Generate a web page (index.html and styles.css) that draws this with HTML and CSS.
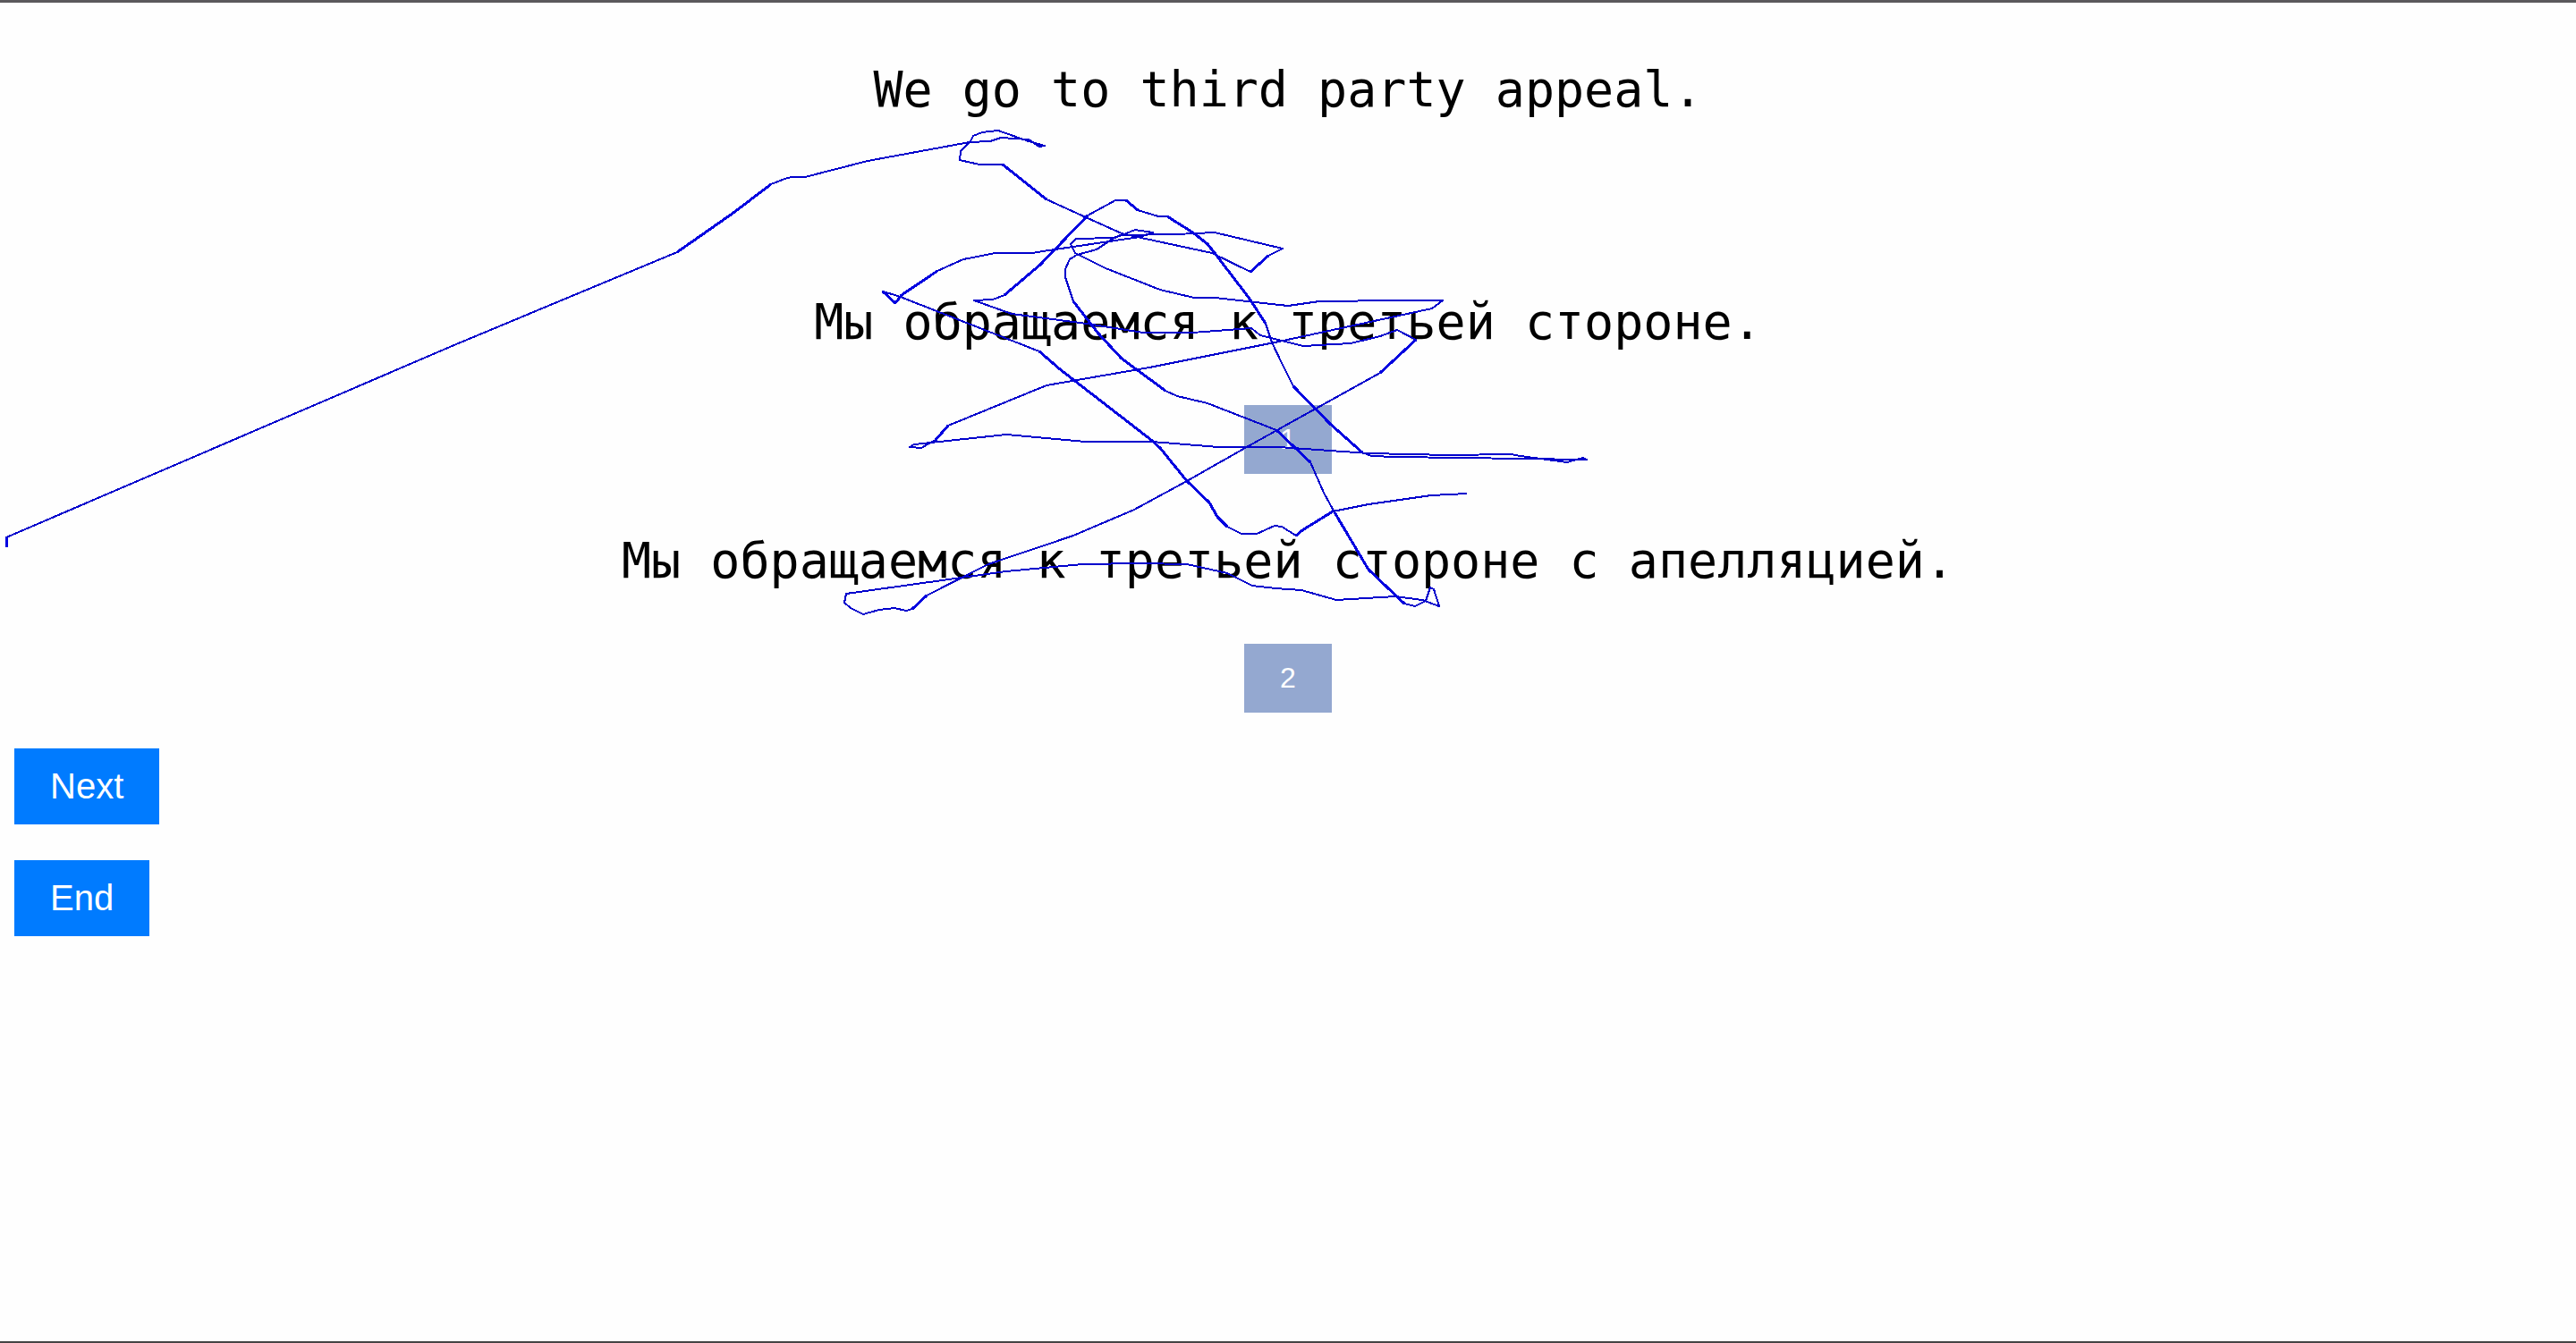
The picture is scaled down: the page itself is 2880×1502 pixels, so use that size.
FILE: index.html
```html
<!DOCTYPE html>
<html lang="ru">
<head>
<meta charset="utf-8">
<title>Translation</title>
<link rel="stylesheet" href="styles.css">
</head>
<body>
<main class="quiz">
  <p class="phrase" lang="en">We go to third party appeal.</p>
  <section class="option">
    <p class="phrase">Мы обращаемся к третьей стороне.</p>
    <button class="choice" type="button">1</button>
  </section>
  <section class="option">
    <p class="phrase">Мы обращаемся к третьей стороне с апелляцией.</p>
    <button class="choice" type="button">2</button>
  </section>
  <div class="actions">
    <button class="action" type="button" lang="en">Next</button>
    <button class="action" type="button" lang="en">End</button>
  </div>
</main>
<!-- pointer trail drawn over the page -->
<svg class="trail" width="1800" height="700" viewBox="0 -1 1800 700" aria-hidden="true">
  <polyline points="8,611 7,600 510,384 757,281 820,237 862,205 880,198 886,197 900,197 970,179 1084,158 1107,157 1119,153 1150,155 1162,163 1168,162 1150,157 1116,145 1098,147 1088,151 1085,157 1074,168 1073,178 1095,183 1121,183 1170,222 1216,243 1254,260 1276,265 1355,282 1398,303 1418,285 1434,277 1358,259 1315,261 1253,262 1245,265 1203,266 1197,272 1202,282 1236,299 1297,323 1335,332 1358,332 1440,341 1475,336 1562,335 1613,335 1601,344 1430,381 1285,410 1170,430 1060,475 1046,491 1030,500 1017,499 1022,496 1125,485 1213,493 1288,493 1362,499 1430,499 1530,506 1620,508 1689,507 1700,509 1752,516 1770,511 1774,513 1560,510 1533,509 1523,505 1487,473 1446,431 1433,405 1422,382 1415,361 1397,333 1358,282 1350,272 1335,260 1305,241 1295,241 1272,234 1259,223 1247,223 1216,240 1163,295 1123,329 1110,334 1089,335 1131,350 1215,361 1278,371 1333,371 1399,366 1409,374 1457,386 1510,383 1543,375 1562,368 1583,379 1543,416 1471,456 1392,500 1327,537 1268,569 1200,598 1105,630 1036,665 1020,680 1013,682 1000,679 983,681 965,686 951,679 944,673 946,663 1125,638 1210,630 1275,629 1327,630 1372,640 1400,654 1426,657 1455,659 1494,670 1560,666 1590,670 1609,677 1603,658 1599,656 1594,671 1582,677 1570,674 1530,636 1492,572 1480,550 1465,516 1427,480 1350,450 1316,442 1303,436 1254,400 1228,372 1200,336 1191,309 1191,300 1196,289 1204,284 1226,278 1244,266 1269,256 1289,259 1274,264 1166,280 1154,282 1113,282 1077,289 1048,302 1008,329 1001,338 987,325 1004,330 1162,392 1185,412 1287,491 1297,500 1327,537 1352,561 1361,577 1372,588 1388,596 1405,596 1425,587 1433,588 1449,598 1456,592 1490,571 1530,563 1600,553 1640,551"/>
  <path class="fast" d="M8 611L7 600M757 281L820 237L862 205M1121 183L1170 222M1398 303L1418 285M1060 475L1046 491M1523 505L1487 473L1446 431M1415 361L1397 333L1358 282L1350 272L1335 260L1305 241M1272 234L1259 223M1216 240L1163 295L1123 329M1583 379L1543 416M1036 665L1020 680M1570 674L1530 636L1492 572M1465 516L1427 480M1303 436L1254 400L1228 372L1200 336M1048 302L1008 329L1001 338L987 325M1162 392L1185 412L1287 491L1297 500L1327 537L1352 561L1361 577L1372 588M1449 598L1456 592L1490 571"/>
</svg>
</body>
</html>
```
FILE: styles.css
```css
* {
  box-sizing: border-box;
}

body {
  margin: 0;
  min-height: 100vh;
  background: #fefefe;
  border-top: 3px solid #5b595c;
  border-bottom: 2px solid #444444;
  color: #000;
}

.quiz {
  display: flex;
  flex-direction: column;
  padding: 62px 16px 40px;
}

.phrase {
  margin: 0;
  font: 55px/70px "DejaVu Sans Mono", monospace;
  text-align: center;
}

.quiz > .phrase {
  margin-bottom: 190px;
}

.option {
  display: flex;
  flex-direction: column;
  align-items: center;
  gap: 58px;
  margin-bottom: 62px;
}

.option:last-of-type {
  margin-bottom: 40px;
}

button {
  border: 0;
  border-radius: 0;
  color: #fff;
  font-family: "Liberation Sans", Arial, sans-serif;
  cursor: pointer;
}

.choice {
  padding: 20px 40px;
  background: #94a8d0;
  font-size: 32px;
  line-height: 37px;
}

.actions {
  display: flex;
  flex-direction: column;
  align-items: flex-start;
  gap: 40px;
}

.action {
  padding: 20px 40px;
  background: #007bff;
  font-size: 40px;
  line-height: 45px;
}

.trail {
  position: absolute;
  top: 0;
  left: 0;
  fill: none;
  stroke: #0000cc;
  stroke-width: 2px;
  stroke-linejoin: round;
  shape-rendering: crispEdges;
  pointer-events: none;
}

.fast {
  stroke: #0000e0;
  stroke-width: 3px;
}
```
